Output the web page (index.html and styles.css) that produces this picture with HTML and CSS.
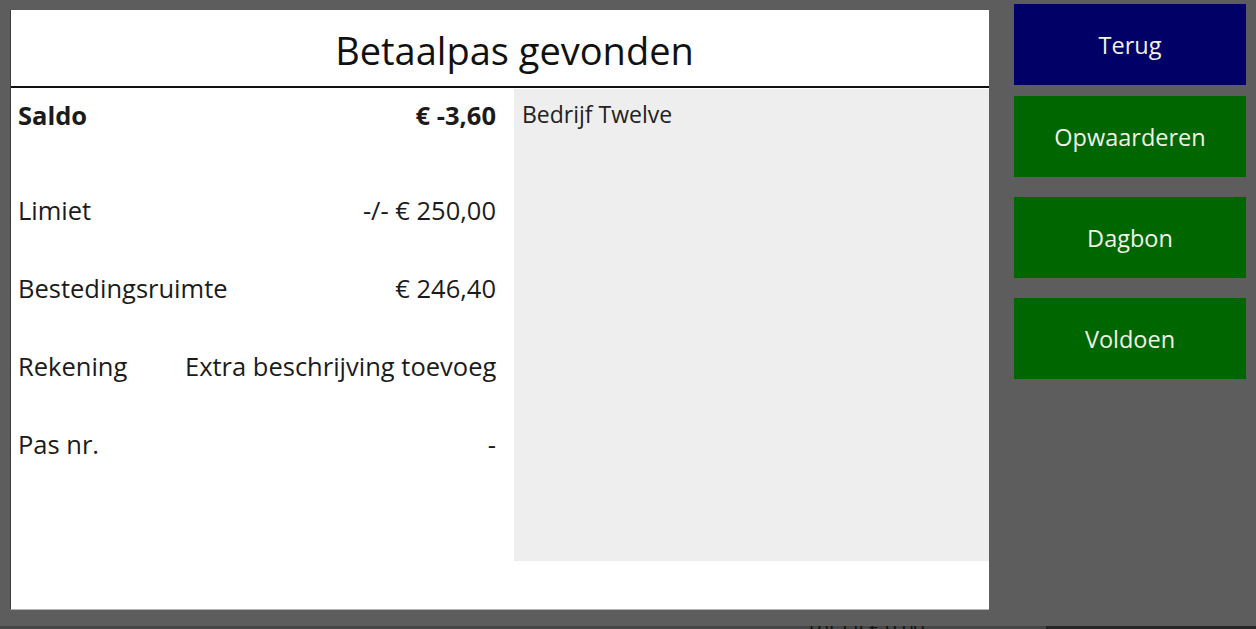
FILE: index.html
```html
<!DOCTYPE html>
<html lang="nl">
<head>
    <meta charset="UTF-8">
    <meta name="viewport" content="width=device-width, initial-scale=1.0">
    <title>Betaalpas gevonden</title>
    <link rel="stylesheet" href="styles.css">
</head>
<body>
    <div class="screen">
        <section class="panel">
            <header class="panel-header">
                <h1>Betaalpas gevonden</h1>
            </header>
            <div class="panel-body">
                <div class="details">
                    <div class="row saldo">
                        <span class="label">Saldo</span>
                        <span class="value">€ -3,60</span>
                    </div>
                    <div class="row">
                        <span class="label">Limiet</span>
                        <span class="value">-/- € 250,00</span>
                    </div>
                    <div class="row">
                        <span class="label">Bestedingsruimte</span>
                        <span class="value">€ 246,40</span>
                    </div>
                    <div class="row">
                        <span class="label">Rekening</span>
                        <span class="value">Extra beschrijving toevoegen</span>
                    </div>
                    <div class="row">
                        <span class="label">Pas nr.</span>
                        <span class="value">-</span>
                    </div>
                </div>
                <div class="company">Bedrijf Twelve</div>
            </div>
        </section>

        <nav class="actions">
            <button class="btn btn-back">Terug</button>
            <button class="btn btn-go first">Opwaarderen</button>
            <button class="btn btn-go">Dagbon</button>
            <button class="btn btn-go">Voldoen</button>
        </nav>
    </div>
    <div class="statusbar">
        <span class="status-text">Totaal £ 0,00</span>
        <span class="status-dark"></span>
    </div>
</body>
</html>
```

FILE: styles.css
```css
html, body {
    margin: 0;
    padding: 0;
    height: 629px;
    overflow: hidden;
}
body {
    font-family: 'Open Sans', 'Noto Sans', sans-serif;
    background-color: #5d5d5d;
    color: #1b1b1b;
    display: flex;
    flex-direction: column;
}
.screen {
    display: flex;
    height: 626px;
}
.panel {
    margin: 10px 0 0 10px;
    width: 979px;
    height: 600px;
    background-color: #fff;
    border-left: 1px solid #3c3c3c;
    border-bottom: 1px solid #b5b5b5;
    box-sizing: border-box;
    display: flex;
    flex-direction: column;
}
.panel-header {
    height: 76px;
    border-bottom: 2px solid #111;
    display: flex;
    align-items: center;
    justify-content: center;
}
.panel-header h1 {
    margin: 4px 0 0 29px;
    font-size: 38px;
    font-weight: 400;
    color: #111;
}
.panel-body {
    display: flex;
    padding-top: 1px;
}
.details {
    width: 503px;
    padding: 6px 18px 0 7px;
    box-sizing: border-box;
    display: flex;
    flex-direction: column;
    gap: 38px;
}
.row {
    display: grid;
    grid-template-columns: 167px 1fr;
    align-items: center;
    height: 40px;
    font-size: 25.5px;
}
.row.saldo {
    font-weight: 700;
    margin-bottom: 17px;
}
.value {
    text-align: right;
    white-space: nowrap;
    overflow: hidden;
}
.company {
    width: 475px;
    height: 472px;
    background-color: #eeeeee;
    padding: 9px 8px;
    box-sizing: border-box;
    font-size: 23px;
    color: #222;
}
.actions {
    margin: 4px 0 0 25px;
    width: 232px;
    display: flex;
    flex-direction: column;
}
.btn {
    height: 81px;
    border: none;
    color: #f2f2e6;
    font-family: inherit;
    font-size: 23.5px;
    margin-bottom: 20px;
    padding: 1px 0 0 0;
}
.btn.first {
    margin-top: -9px;
}
.btn-back {
    background-color: #000066;
}
.btn-go {
    background-color: #006600;
}
.statusbar {
    height: 3px;
    background-color: #464646;
    display: flex;
    overflow: hidden;
}
.status-text {
    margin-left: 806px;
    width: 240px;
    font-size: 20px;
    line-height: 3px;
    color: #111;
}
.status-dark {
    flex: 1;
    background-color: #262626;
}
```
